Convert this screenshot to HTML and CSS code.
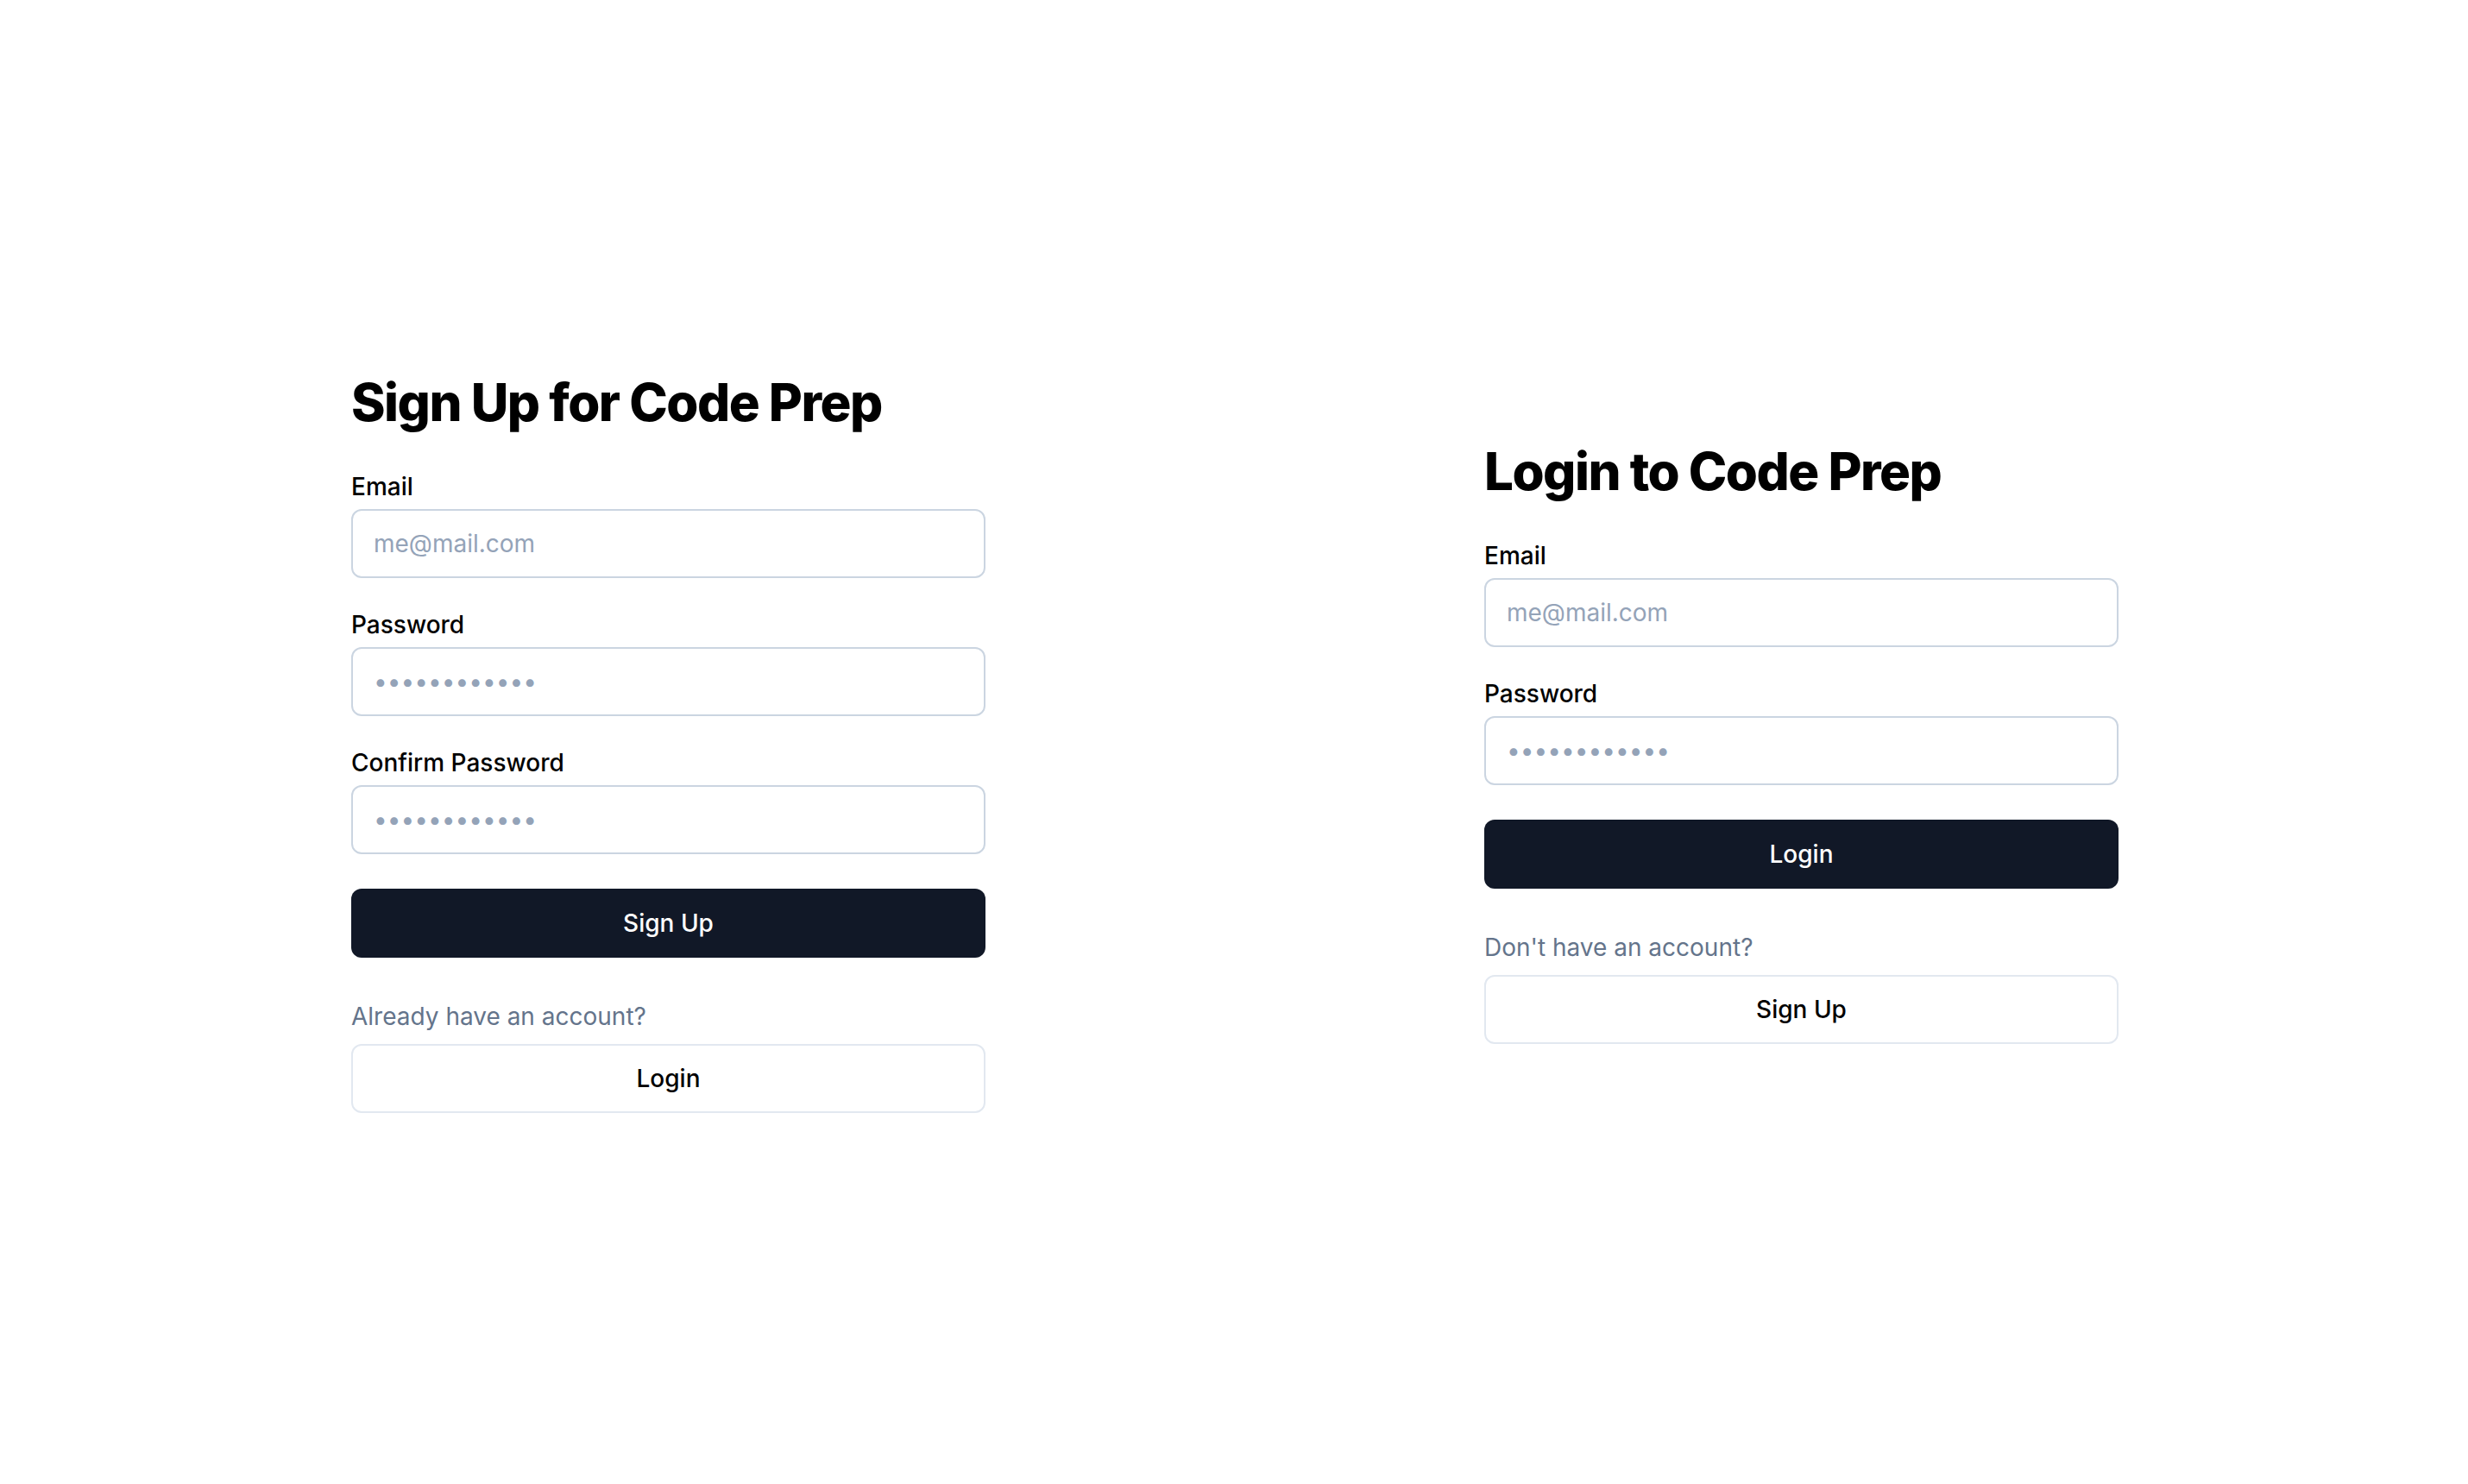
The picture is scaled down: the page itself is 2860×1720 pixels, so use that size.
FILE: index.html
```html
<!DOCTYPE html>
<html lang="en">
<head>
<meta charset="utf-8">
<title>Code Prep</title>
<link rel="stylesheet" href="styles.css">
</head>
<body>
<main class="page">
  <form class="auth-form">
    <h1 class="auth-title">Sign Up for Code Prep</h1>
    <div class="fields">
      <div class="field">
        <label class="field-label" for="su-email">Email</label>
        <input class="field-input" id="su-email" type="email" placeholder="me@mail.com">
      </div>
      <div class="field">
        <label class="field-label" for="su-pass">Password</label>
        <input class="field-input" id="su-pass" type="password" placeholder="••••••••••••">
      </div>
      <div class="field">
        <label class="field-label" for="su-confirm">Confirm Password</label>
        <input class="field-input" id="su-confirm" type="password" placeholder="••••••••••••">
      </div>
    </div>
    <button class="btn btn-primary" type="button">Sign Up</button>
    <p class="alt-text">Already have an account?</p>
    <button class="btn btn-outline" type="button">Login</button>
  </form>

  <form class="auth-form">
    <h1 class="auth-title">Login to Code Prep</h1>
    <div class="fields">
      <div class="field">
        <label class="field-label" for="li-email">Email</label>
        <input class="field-input" id="li-email" type="email" placeholder="me@mail.com">
      </div>
      <div class="field">
        <label class="field-label" for="li-pass">Password</label>
        <input class="field-input" id="li-pass" type="password" placeholder="••••••••••••">
      </div>
    </div>
    <button class="btn btn-primary" type="button">Login</button>
    <p class="alt-text">Don't have an account?</p>
    <button class="btn btn-outline" type="button">Sign Up</button>
  </form>
</main>
</body>
</html>
```
FILE: styles.css
```css
* {
  box-sizing: border-box;
}

html, body {
  margin: 0;
  padding: 0;
  background: #ffffff;
}

body {
  font-family: Inter, "Noto Sans", "Liberation Sans", sans-serif;
  color: #000000;
}

.page {
  height: 1720px;
  display: flex;
  justify-content: center;
  align-items: center;
  gap: 578px;
  padding-left: 2px;
}

.auth-form {
  width: 735px;
  display: flex;
  flex-direction: column;
  margin: 0;
}

.auth-title {
  margin: 0 0 48px 0;
  font-size: 60px;
  line-height: 72px;
  font-weight: 800;
  letter-spacing: -0.025em;
  color: #000000;
}

.fields {
  display: flex;
  flex-direction: column;
  gap: 40px;
}

.field {
  display: flex;
  flex-direction: column;
  gap: 12px;
}

.field-label {
  font-size: 28px;
  line-height: 28px;
  font-weight: 500;
  color: #000000;
}

.field-input {
  height: 80px;
  width: 100%;
  border: 2px solid #cbd5e1;
  border-radius: 12px;
  padding: 0 24px;
  font-family: inherit;
  font-size: 28px;
  color: #0f172a;
  background: #ffffff;
  outline: none;
}

.field-input::placeholder {
  color: #94a3b8;
  opacity: 1;
}

.btn {
  height: 80px;
  width: 100%;
  border-radius: 12px;
  font-family: inherit;
  font-size: 28px;
  font-weight: 500;
  cursor: pointer;
}

.btn-primary {
  margin-top: 40px;
  background: #111827;
  color: #ffffff;
  border: none;
}

.btn-outline {
  background: #ffffff;
  color: #000000;
  border: 2px solid #e2e8f0;
}

.alt-text {
  margin: 48px 0 12px 0;
  font-size: 28px;
  line-height: 40px;
  color: #64748b;
}
```
